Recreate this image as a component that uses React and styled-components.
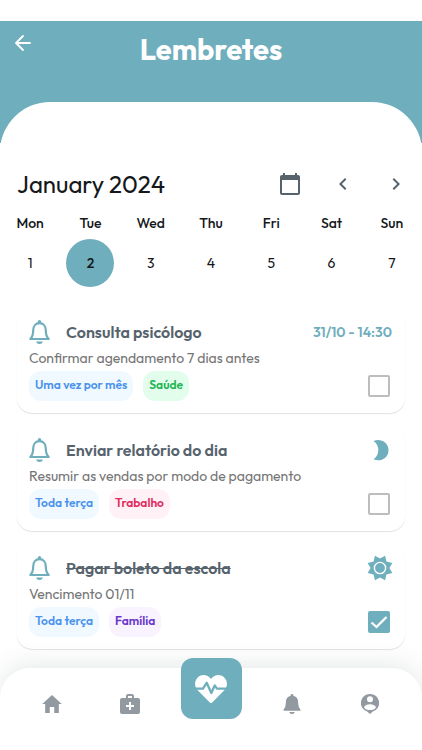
import React, { useState } from 'react';
import styled, { createGlobalStyle } from 'styled-components';
import { IoMdHome } from 'react-icons/io';
import { MdCalendarToday, MdChevronLeft, MdChevronRight, MdMedicalServices } from 'react-icons/md';

const teal = '#6faebd';
const slate = '#57636c';

const GlobalStyle = createGlobalStyle`
  *, *::before, *::after { box-sizing: border-box; }
  body { margin: 0; background: #fff; color: #14181b; font-family: Outfit, Lato, sans-serif; }
  button { font: inherit; border: 0; padding: 0; background: none; cursor: pointer; }
  h1, h2, h3, p { margin: 0; }
  svg { display: block; flex: none; }
`;

const Page = styled.div`
  min-height: 100vh;
  display: flex;
  flex-direction: column;
  padding-top: 21px;
`;

const Header = styled.header`
  height: 122px;
  overflow: hidden;
  background: ${teal};
`;

const HeaderBar = styled.div`
  height: 81px;
  display: grid;
  grid-template-columns: 46px 1fr 46px;
  align-items: start;
`;

const BackButton = styled.button`
  height: 44px;
  display: grid;
  place-items: center;
  color: #fff;
`;

const Title = styled.h1`
  padding-top: 10px;
  color: #fff;
  font-size: 29px;
  line-height: 38px;
  font-weight: 700;
  text-align: center;
`;

const SheetTop = styled.div`
  height: 60px;
  border-radius: 50px 50px 0 0;
  background: #fff;
`;

const Calendar = styled.section`
  padding-top: 17px;
`;

const MonthRow = styled.div`
  height: 48px;
  display: flex;
  align-items: center;
  padding: 0 0 0 17px;
`;

const Month = styled.h2`
  flex: 1;
  font-size: 24px;
  line-height: 32px;
  font-weight: 400;
`;

const MonthButton = styled.button`
  width: 53px;
  height: 48px;
  display: grid;
  place-items: center;
  color: ${slate};
`;

const Week = styled.div`
  display: grid;
  grid-template-columns: repeat(7, 1fr);
`;

const Day = styled.div`
  display: flex;
  flex-direction: column;
  align-items: center;
  gap: 6px;
  font-size: 14px;
  line-height: 20px;
  font-weight: 500;
  padding-top: 5px;
`;

const DayButton = styled.button`
  width: 48px;
  height: 48px;
  border-radius: 50%;
  background: ${(p) => (p.$active ? teal : 'transparent')};
  color: #14181b;
  font-weight: ${(p) => (p.$active ? 500 : 400)};
`;

const List = styled.ul`
  list-style: none;
  margin: 0;
  padding: 21px 17px 18px;
  display: flex;
  flex-direction: column;
  gap: 13px;
`;

const Card = styled.li`
  height: 105px;
  padding: 9px 12px 12px;
  border-radius: 15px;
  background: #fff;
  box-shadow: 0 1px 1px rgba(0, 0, 0, 0.12);
`;

const CardHead = styled.div`
  height: 30px;
  display: flex;
  align-items: center;
  color: ${teal};
`;

const CardTitle = styled.h3`
  flex: 1;
  padding-left: 16px;
  color: ${slate};
  font-size: 16px;
  line-height: 24px;
  font-weight: 600;
  text-decoration: ${(p) => (p.$done ? 'line-through' : 'none')};
`;

const When = styled.span`
  font-size: 14px;
  font-weight: 600;
  padding-right: 1px;
`;

const Detail = styled.p`
  color: #757575;
  font-size: 14px;
  line-height: 22px;
`;

const CardFoot = styled.div`
  display: flex;
  align-items: center;
  gap: 10px;
  padding-top: 2px;
`;

const tones = {
  blue: ['#4b93eb', '#f0f9ff'],
  green: ['#22b455', '#e3fdec'],
  red: ['#e02c5d', '#fff1f5'],
  purple: ['#6937cb', '#f8f3ff'],
};

const Tag = styled.span`
  height: 30px;
  padding: 0 6px;
  border-radius: 12px;
  font-size: 12px;
  line-height: 28px;
  font-weight: 600;
  color: ${(p) => tones[p.$tone][0]};
  background: ${(p) => tones[p.$tone][1]};
`;

const CheckLabel = styled.label`
  position: relative;
  display: grid;
  margin-left: auto;
  margin-right: 3px;
  svg { position: absolute; inset: 0; pointer-events: none; }
`;

const Check = styled.input`
  appearance: none;
  width: 22px;
  height: 22px;
  margin: 0;
  border: 2px solid #bdbdbd;
  border-radius: 2px;
  &:checked { background: ${teal}; border-color: ${teal}; }
`;

const Nav = styled.nav`
  position: sticky;
  bottom: 0;
  height: 82px;
  margin-top: auto;
  padding: 0 13px;
  display: flex;
  border-radius: 30px 30px 0 0;
  background: #fff;
  box-shadow: 0 -4px 24px rgba(87, 99, 108, 0.14);
`;

const NavButton = styled.button`
  flex: 0 1 78px;
  height: 71px;
  display: grid;
  place-items: center;
  color: #9299a1;
`;

const PulseButton = styled.button`
  width: 61px;
  height: 61px;
  margin: -10px auto 0;
  display: grid;
  place-items: center;
  border-radius: 12px;
  background: ${teal};
  color: #fff;
`;

const BackIcon = () => (
  <svg width="18" height="18" viewBox="0 0 18 18" fill="none" stroke="currentColor" strokeWidth="1.8" strokeLinecap="round" strokeLinejoin="round">
    <path d="M16 9H2M9 2L2 9l7 7" />
  </svg>
);

const BellIcon = ({ width, height, filled }) => (
  <svg width={width} height={height} viewBox="0 0 21 24" fill="currentColor">
    <circle cx="10.500" cy="1.800" r="1.700" />
    <path
      d="M1.300 19C4 16.500 4.200 14 4.200 10.500C4.200 6 6.700 3.200 10.500 3.200S16.800 6 16.800 10.500C16.800 14 17 16.500 19.700 19Z"
      fill={filled ? 'currentColor' : 'none'}
      stroke="currentColor"
      strokeWidth="2.200"
      strokeLinejoin="round"
    />
    <path d="M7.300 21.500h6.400a3.200 2.500 0 0 1-6.400 0Z" />
  </svg>
);

const PulseIcon = () => (
  <svg width="32" height="28" viewBox="0 0 32 28">
    <path fill="currentColor" d="M16 4C12.500-.8 6.500-1 3 2.200C-.8 5.700-.9 11.500 2.700 15.200L14.800 27.500Q16 28.600 17.200 27.500L29.300 15.200C32.900 11.500 32.800 5.700 29 2.200C25.500-1 19.500-.8 16 4Z" />
    <path fill="none" stroke={teal} strokeWidth="2.300" strokeLinejoin="round" d="M-1 13.700H8L11.700 7.800L16.300 18L19.700 10.500L22 13.700H33" />
  </svg>
);

const ProfileIcon = () => (
  <svg width="18" height="20" viewBox="0 0 18 20">
    <path fill="currentColor" d="M9 0a9 9 0 0 1 2.800 17.600L9 20l-2.800-2.400A9 9 0 0 1 9 0Z" />
    <circle cx="9" cy="5.200" r="3" fill="#fff" />
    <ellipse cx="9" cy="13.200" rx="5.800" ry="2.900" fill="#fff" />
  </svg>
);

const MoonIcon = () => (
  <svg width="28" height="28" viewBox="0 0 28 28" fill="currentColor" role="img" aria-label="Noite">
    <path d="M8.500 5C15 1.900 23.500 6 23.500 14.200S15 26.300 8.500 23.300C15 19 15 9 8.500 5Z" />
  </svg>
);

const SunIcon = () => (
  <svg width="26" height="26" viewBox="1 1 24 24" role="img" aria-label="Dia">
    <path fill="currentColor" d="M8.300 1.600 13 4.300 17.700 1.600 18.900 7.100 24.400 8.300 21.700 13 24.400 17.700 18.900 18.900 17.700 24.400 13 21.700 8.300 24.400 7.100 18.900 1.600 17.700 4.300 13 1.600 8.300 7.100 7.100Z" />
    <circle cx="13" cy="13" r="5.200" fill="currentColor" stroke="#fff" strokeWidth="1.300" />
  </svg>
);

const TickIcon = () => (
  <svg width="22" height="22" viewBox="0 0 22 22" fill="none" stroke="#fff" strokeWidth="2.300">
    <path d="M3.500 11.500 8.500 16 18.500 6" />
  </svg>
);

const days = ['Mon', 'Tue', 'Wed', 'Thu', 'Fri', 'Sat', 'Sun'];

const reminders = [
  { title: 'Consulta psicólogo', detail: 'Confirmar agendamento 7 dias antes', mark: <When>31/10 - 14:30</When>, tags: [['Uma vez por mês', 'blue'], ['Saúde', 'green']], done: false },
  { title: 'Enviar relatório do dia', detail: 'Resumir as vendas por modo de pagamento', mark: <MoonIcon />, tags: [['Toda terça', 'blue'], ['Trabalho', 'red']], done: false },
  { title: 'Pagar boleto da escola', detail: 'Vencimento 01/11', mark: <SunIcon />, tags: [['Toda terça', 'blue'], ['Família', 'purple']], done: true },
];

function Reminder({ item }) {
  const [done, setDone] = useState(item.done);
  return (
    <Card>
      <CardHead>
        <BellIcon width={21} height={24} />
        <CardTitle $done={done}>{item.title}</CardTitle>
        {item.mark}
      </CardHead>
      <Detail>{item.detail}</Detail>
      <CardFoot>
        {item.tags.map(([text, tone]) => <Tag key={text} $tone={tone}>{text}</Tag>)}
        <CheckLabel>
          <Check type="checkbox" aria-label={item.title} checked={done} onChange={() => setDone(!done)} />
          {done && <TickIcon />}
        </CheckLabel>
      </CardFoot>
    </Card>
  );
}

export default function App() {
  const [selected, setSelected] = useState(2);
  return (
    <Page>
      <GlobalStyle />
      <Header>
        <HeaderBar>
          <BackButton aria-label="Voltar"><BackIcon /></BackButton>
          <Title>Lembretes</Title>
        </HeaderBar>
        <SheetTop />
      </Header>
      <Calendar>
        <MonthRow>
          <Month>January 2024</Month>
          <MonthButton aria-label="Hoje"><MdCalendarToday size={24} /></MonthButton>
          <MonthButton aria-label="Semana anterior"><MdChevronLeft size={24} /></MonthButton>
          <MonthButton aria-label="Próxima semana"><MdChevronRight size={24} /></MonthButton>
        </MonthRow>
        <Week>
          {days.map((name, i) => (
            <Day key={name}>
              {name}
              <DayButton $active={selected === i + 1} onClick={() => setSelected(i + 1)}>{i + 1}</DayButton>
            </Day>
          ))}
        </Week>
      </Calendar>
      <List>
        {reminders.map((item) => <Reminder key={item.title} item={item} />)}
      </List>
      <Nav>
        <NavButton aria-label="Início"><IoMdHome size={24} /></NavButton>
        <NavButton aria-label="Saúde"><MdMedicalServices size={24} /></NavButton>
        <PulseButton aria-label="Bem-estar"><PulseIcon /></PulseButton>
        <NavButton aria-label="Notificações"><BellIcon width={18} height={20} filled /></NavButton>
        <NavButton aria-label="Perfil"><ProfileIcon /></NavButton>
      </Nav>
    </Page>
  );
}
